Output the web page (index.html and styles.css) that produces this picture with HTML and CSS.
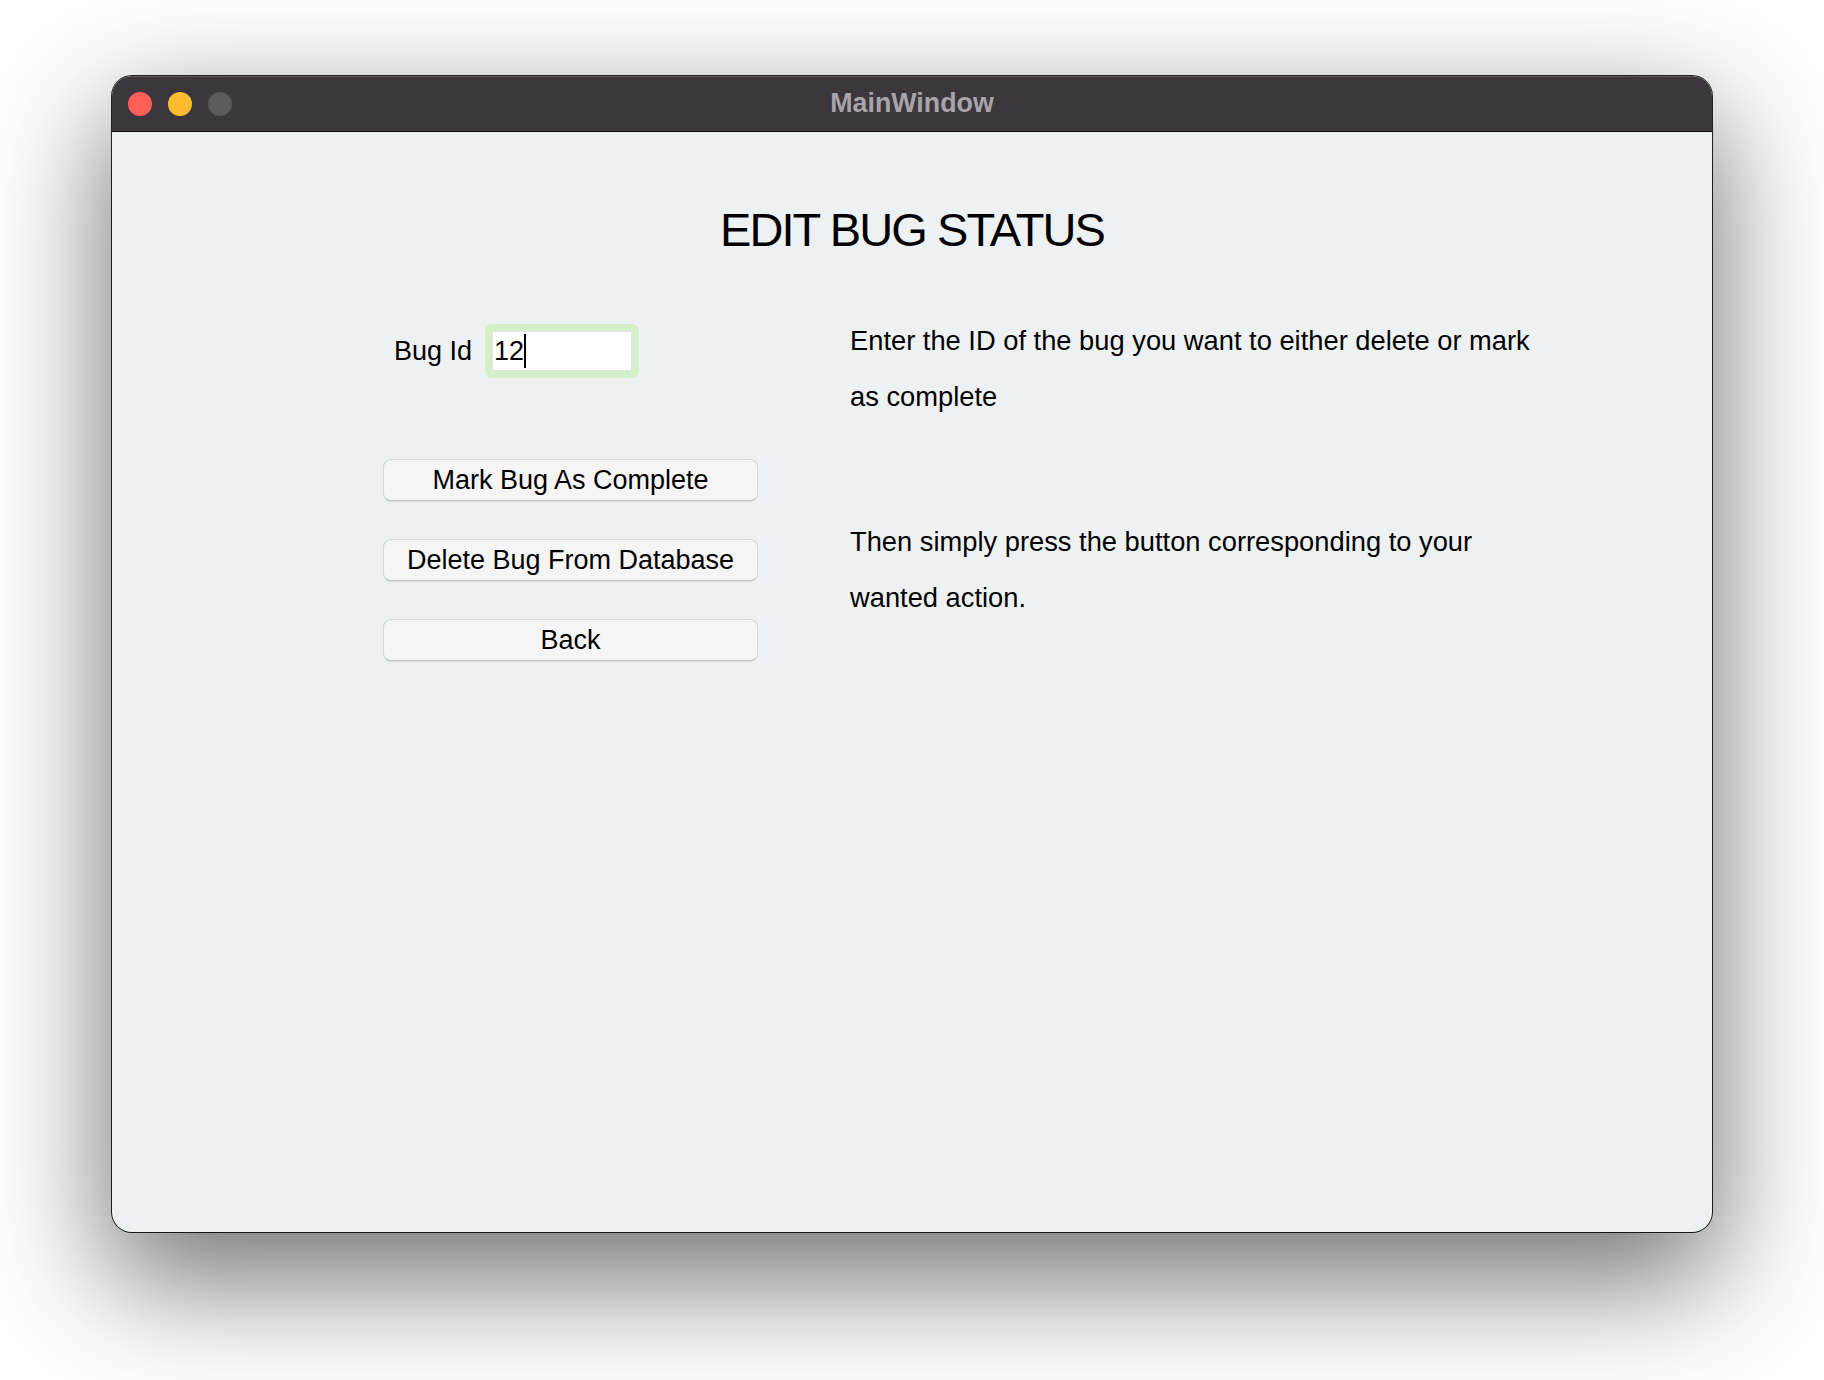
FILE: index.html
```html
<!DOCTYPE html>
<html lang="en">
<head>
<meta charset="utf-8">
<title>MainWindow</title>
<link rel="stylesheet" href="styles.css">
</head>
<body>
<div class="window">
  <div class="titlebar">
    <div class="lights">
      <span class="light red"></span>
      <span class="light yellow"></span>
      <span class="light gray"></span>
    </div>
    <div class="title">MainWindow</div>
  </div>
  <div class="content">
    <h1 class="heading">EDIT BUG STATUS</h1>
    <div class="columns">
      <div class="left">
        <div class="id-row">
          <label class="id-label" for="bugid">Bug Id</label>
          <div class="focus-ring">
            <div class="field" id="bugid">12<span class="caret"></span></div>
          </div>
        </div>
        <div class="buttons">
          <button class="btn">Mark Bug As Complete</button>
          <button class="btn">Delete Bug From Database</button>
          <button class="btn">Back</button>
        </div>
      </div>
      <div class="right">
        <p class="info first">Enter the ID of the bug you want to either delete or mark as complete</p>
        <p class="info second">Then simply press the button corresponding to your wanted action.</p>
      </div>
    </div>
  </div>
</div>
</body>
</html>
```
FILE: styles.css
```css
html, body {
  margin: 0;
  padding: 0;
  background: #ffffff;
}
body {
  width: 1824px;
  height: 1380px;
  overflow: hidden;
  font-family: "Liberation Sans", Arial, sans-serif;
}
.window {
  margin: 76px 0 0 112px;
  width: 1600px;
  height: 1156px;
  border-radius: 20px;
  overflow: hidden;
  background: #eef1f2;
  box-shadow: 0 0 0 1px rgba(0,0,0,0.85), 0 44px 120px 6px rgba(0,0,0,0.55);
  display: flex;
  flex-direction: column;
}
.titlebar {
  height: 55px;
  flex: none;
  background: #3b373b;
  border-bottom: 1px solid #0c0a0c;
  box-shadow: inset 0 1px 0 rgba(255,255,255,0.18);
  display: flex;
  align-items: center;
  position: relative;
}
.lights {
  display: flex;
  gap: 16px;
  padding-left: 16px;
}
.light {
  width: 24px;
  height: 24px;
  border-radius: 50%;
  display: block;
}
.red { background: #fe5f57; }
.yellow { background: #febc2e; }
.gray { background: #5d595e; }
.title {
  position: absolute;
  left: 0;
  right: 0;
  top: 0;
  bottom: 0;
  display: flex;
  align-items: center;
  justify-content: center;
  color: #a8a4a9;
  font-weight: bold;
  font-size: 26.8px;
}
.content {
  flex: 1;
  padding-top: 74px;
}
.heading {
  margin: 0;
  text-align: center;
  font-weight: normal;
  font-size: 47px;
  line-height: 48px;
  letter-spacing: -1.9px;
  color: #000;
}
.columns {
  display: flex;
  padding-left: 271px;
  margin-top: 59px;
}
.left {
  width: 375px;
  flex: none;
  padding-top: 11px;
}
.id-row {
  display: flex;
  align-items: center;
  padding-left: 11px;
  gap: 13px;
}
.id-label {
  font-size: 27px;
  color: #000;
}
.focus-ring {
  padding: 7px;
  background: #d3f0c9;
  border-radius: 7px;
}
.field {
  width: 140px;
  height: 40px;
  background: #fff;
  box-shadow: inset 0 0 0 1px #e2e4e2;
  font-size: 27px;
  line-height: 40px;
  padding-left: 2px;
  box-sizing: border-box;
  display: flex;
  align-items: center;
}
.caret {
  display: inline-block;
  width: 2px;
  height: 34px;
  background: #000;
  margin-left: 0;
}
.buttons {
  display: flex;
  flex-direction: column;
  gap: 38px;
  margin-top: 81px;
}
.btn {
  width: 375px;
  height: 42px;
  font-family: "Liberation Sans", Arial, sans-serif;
  font-size: 27px;
  color: #000;
  background: #f5f5f5;
  border: 1px solid #d6d6d6;
  border-bottom-color: #bdbdbd;
  border-radius: 8px;
  box-shadow: 0 1px 1px rgba(0,0,0,0.08);
  padding: 0;
}
.right {
  margin-left: 92px;
  width: 700px;
}
.info {
  margin: 0;
  font-family: "Liberation Sans Narrow", "Liberation Sans", Arial, sans-serif;
  font-size: 27.3px;
  line-height: 56px;
  color: #000;
}
.second {
  margin-top: 89px;
}
```
